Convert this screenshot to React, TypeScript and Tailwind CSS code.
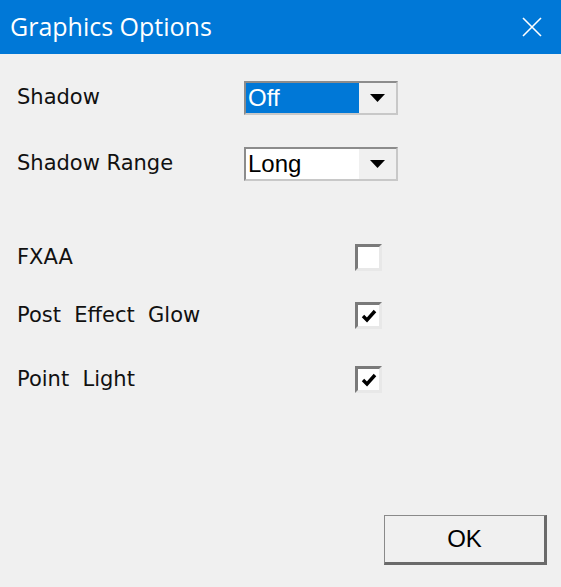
import React from "react";

const labelFont = { fontFamily: '"DejaVu Sans", "Liberation Sans", sans-serif' };

function Combo({ value, selected }: { value: string; selected?: boolean }) {
  return (
    <div className="flex h-[34px] w-[154px] border-2 border-t-[#8c8c8c] border-l-[#8c8c8c] border-r-[#c8c8c8] border-b-[#c8c8c8] bg-white">
      <div
        className={`flex flex-1 items-center pl-[2px] text-[24px] leading-none ${
          selected ? "bg-[#0078d7] text-white" : "bg-white text-black"
        }`}
        style={{ fontFamily: '"Liberation Sans", Arial, sans-serif' }}
      >
        {value}
      </div>
      <div className="flex w-[37px] items-center justify-center bg-[#f0f0f0]">
        <svg width="15" height="8" viewBox="0 0 15 8">
          <polygon points="0,0 15,0 7.5,8" fill="#000" />
        </svg>
      </div>
    </div>
  );
}

function Check({ checked }: { checked?: boolean }) {
  return (
    <div className="flex h-[27px] w-[27px] items-center justify-center border-[3px] border-t-[#7a7a7a] border-l-[#7a7a7a] border-r-[#e8e8e8] border-b-[#e8e8e8] bg-white">
      {checked && (
        <svg width="16" height="14" viewBox="0 0 16 14">
          <polyline
            points="2,7 6,11 14,2"
            fill="none"
            stroke="#000"
            strokeWidth="3.4"
          />
        </svg>
      )}
    </div>
  );
}

export default function App() {
  return (
    <div className="flex h-[587px] w-[561px] flex-col bg-[#f0f0f0]">
      <div className="flex h-[54px] items-center justify-between bg-[#0078d7] pl-[10px] pr-[18px]">
        <span
          className="text-[25px] text-white"
          style={{ fontFamily: '"Open Sans", "Noto Sans", sans-serif' }}
        >
          Graphics Options
        </span>
        <svg width="22" height="22" viewBox="0 0 22 22">
          <path d="M2 2 L20 20 M20 2 L2 20" stroke="#fff" strokeWidth="1.6" fill="none" />
        </svg>
      </div>

      <div className="flex flex-1 flex-col pl-[17px]" style={labelFont}>
        <div className="mt-[27px] flex h-[34px] items-center">
          <span className="w-[227px] text-[21px] text-[#111]">Shadow</span>
          <Combo value="Off" selected />
        </div>
        <div className="mt-[32px] flex h-[34px] items-center">
          <span className="w-[227px] text-[21px] text-[#111]">Shadow Range</span>
          <Combo value="Long" />
        </div>

        <div className="mt-[63px] flex h-[27px] items-center">
          <span className="w-[338px] text-[21px] text-[#111]">FXAA</span>
          <Check />
        </div>
        <div className="mt-[31px] flex h-[27px] items-center">
          <span className="w-[338px] whitespace-pre text-[21px] text-[#111]">Post  Effect  Glow</span>
          <Check checked />
        </div>
        <div className="mt-[37px] flex h-[27px] items-center">
          <span className="w-[338px] whitespace-pre text-[21px] text-[#111]">Point  Light</span>
          <Check checked />
        </div>

        <div className="mt-auto mb-[22px] flex justify-end pr-[14px]">
          <button
            className="h-[50px] w-[163px] border border-t-[#8a8a8a] border-l-[#8a8a8a] border-r-[3px] border-b-[3px] border-r-[#6a6a6a] border-b-[#6a6a6a] bg-[#f0f0f0] text-[24px] text-black"
            style={{ fontFamily: '"Liberation Sans", Arial, sans-serif' }}
          >
            OK
          </button>
        </div>
      </div>
    </div>
  );
}
